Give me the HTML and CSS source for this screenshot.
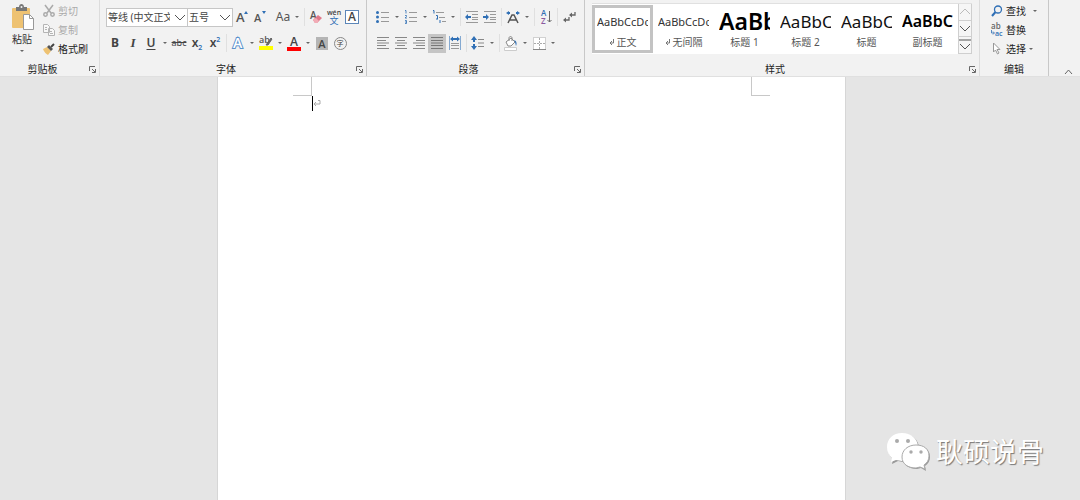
FILE: index.html
```html
<!DOCTYPE html>
<html lang="zh-CN">
<head>
    <meta charset="UTF-8">
    <meta name="viewport" content="width=device-width, initial-scale=1.0">

    <title>文档</title>

    <link rel="stylesheet" href="styles.css">
</head>
<body>

    <header class="ribbon">

        <section class="group group-clipboard">
            <div class="group-body clipboard">
                <button class="paste" type="button">
                    <svg width="24" height="28" viewBox="0 0 24 28">
                        <rect x="2" y="4" width="18" height="20" rx="1" fill="#eec272"/>
                        <path d="M6 3h3c0-4 5-4 5 0h3v4H6z" fill="#777"/>
                        <circle cx="11.500" cy="3" r="1" fill="#f2f2f2"/>
                        <path d="M13.500 10.500h6l4 4v11h-10z" fill="#fff" stroke="#999"/>
                        <path d="M19.500 10.500v4h4" fill="none" stroke="#999"/>
                    </svg>
                    <span>粘贴</span>
                    <i class="caret"></i>
                </button>
                <div class="commands">
                    <button class="command" type="button" disabled>
                        <svg width="12" height="12" viewBox="0 0 12 12" fill="none" stroke="#aaa" stroke-width="1.500">
                            <path d="M2 0l6 8M10 0L4 8"/>
                            <circle cx="2.500" cy="9.500" r="1.700"/>
                            <circle cx="9.500" cy="9.500" r="1.700"/>
                        </svg>
                        剪切
                    </button>
                    <button class="command" type="button" disabled>
                        <svg width="12" height="12" viewBox="0 0 12 12" fill="#f8f8f8" stroke="#b4b4b4">
                            <path d="M.5.5h4l2 2v6h-6zM5.500 4.500h4l2 2v5h-6z"/>
                            <path d="M2 3.500h2M2 5.500h2M7 7.500h2M7 9.500h3"/>
                        </svg>
                        复制
                    </button>
                    <button class="command" type="button">
                        <svg width="12" height="12" viewBox="0 0 12 12">
                            <path d="M0 6l4-2 4 4-3 4c-2-1-4-3-5-6z" fill="#eec272"/>
                            <path d="M4 4l2-2 4 4-2 2z" fill="#555"/>
                            <path d="M8 4l3-3" stroke="#444" stroke-width="2"/>
                        </svg>
                        格式刷
                    </button>
                </div>
            </div>
            <div class="group-footer">
                <span>剪贴板</span>
                <button class="launcher" type="button" aria-label="剪贴板设置"><svg width="7" height="7" viewBox="0 0 7 7"><path d="M.5 5V.5H6M3 3l3 3M6.500 3v3.500H3" fill="none" stroke="#666"/></svg></button>
            </div>
        </section>

        <section class="group group-font">
            <div class="group-body tools">
                <div class="tool-row">
                    <div class="combo combo-font">
                        <select aria-label="字体"><option>等线 (中文正文)</option></select>
                        <svg width="12" height="7" viewBox="0 0 12 7"><path d="M1 1l5 5 5-5" fill="none" stroke="#555"/></svg>
                    </div>
                    <div class="combo combo-size">
                        <select aria-label="字号"><option>五号</option></select>
                        <svg width="12" height="7" viewBox="0 0 12 7"><path d="M1 1l5 5 5-5" fill="none" stroke="#555"/></svg>
                    </div>
                    <button class="tool" type="button" aria-label="增大字号">
                        <svg width="14" height="16" viewBox="0 0 14 16"><text x="1" y="13" class="glyph">A</text><path d="M9 5l2-3 2 3z" fill="#2f6fb5"/></svg>
                    </button>
                    <button class="tool" type="button" aria-label="减小字号">
                        <svg width="14" height="16" viewBox="0 0 14 16"><text x="1" y="13" class="glyph glyph-small">A</text><path d="M9 2l2 3 2-3z" fill="#2f6fb5"/></svg>
                    </button>
                    <i class="sep sep-clear"></i>
                    <button class="tool tool-case" type="button">Aa</button>
                    <button class="drop" type="button" aria-label="更改大小写"><i class="caret"></i></button>
                    <i class="sep"></i>
                    <button class="tool" type="button" aria-label="清除格式">
                        <svg width="14" height="14" viewBox="0 0 14 14"><text x="1" y="9" class="glyph glyph-clear">A</text><path d="M4 10l5-5 4 3-5 5H6z" fill="#e0798a"/><path d="M4 10l3-2 3 3-2 2H6z" fill="#f2acb6"/></svg>
                    </button>
                    <button class="tool" type="button" aria-label="拼音指南">
                        <svg width="14" height="16" viewBox="0 0 14 16"><text x="7" y="6" class="pinyin">wén</text><text x="7" y="15" class="pinyin-char">文</text></svg>
                    </button>
                    <button class="tool" type="button"><span class="boxed">A</span></button>
                </div>
                <div class="tool-row">
                    <button class="tool bold" type="button">B</button>
                    <button class="tool italic" type="button">I</button>
                    <button class="tool underline" type="button">U</button>
                    <button class="drop" type="button" aria-label="下划线样式"><i class="caret"></i></button>
                    <button class="tool strike" type="button">abc</button>
                    <button class="tool script" type="button">x<sub>2</sub></button>
                    <button class="tool script" type="button">x<sup>2</sup></button>
                    <i class="sep"></i>
                    <button class="tool" type="button" aria-label="文本效果">
                        <svg width="14" height="14" viewBox="0 0 14 14"><text x="2" y="12" class="outlined">A</text></svg>
                    </button>
                    <button class="drop" type="button" aria-label="文本效果选项"><i class="caret"></i></button>
                    <button class="tool" type="button" aria-label="突出显示">
                        <svg width="14" height="14" viewBox="0 0 14 14"><text x="0" y="7" class="glyph glyph-tiny">ab</text><path d="M7 9l5-7 1 1-4 6-2 0z" fill="#666" stroke="#666"/><path d="M0 10h14v4H0z" fill="#ff0"/></svg>
                    </button>
                    <button class="drop" type="button" aria-label="突出显示颜色"><i class="caret"></i></button>
                    <button class="tool" type="button"><span class="colored">A</span></button>
                    <button class="drop" type="button" aria-label="字体颜色"><i class="caret"></i></button>
                    <button class="tool" type="button"><span class="shaded">A</span></button>
                    <button class="tool" type="button"><span class="circled">字</span></button>
                </div>
            </div>
            <div class="group-footer">
                <span>字体</span>
                <button class="launcher" type="button" aria-label="字体设置"><svg width="7" height="7" viewBox="0 0 7 7"><path d="M.5 5V.5H6M3 3l3 3M6.500 3v3.500H3" fill="none" stroke="#666"/></svg></button>
            </div>
        </section>

        <section class="group group-paragraph">
            <div class="group-body tools">
                <div class="tool-row">
                    <button class="tool" type="button" aria-label="项目符号">
                        <svg width="14" height="12" viewBox="0 0 14 12"><path d="M5 1.500h8M5 6.500h8M5 10.500h8" stroke="#999"/><g fill="#2f6fb5"><circle cx="1.500" cy="1.500" r="1.500"/><circle cx="1.500" cy="6" r="1.500"/><circle cx="1.500" cy="10.500" r="1.500"/></g></svg>
                    </button>
                    <button class="drop" type="button" aria-label="项目符号库"><i class="caret"></i></button>
                    <button class="tool" type="button" aria-label="编号">
                        <svg width="14" height="14" viewBox="0 0 14 14"><path d="M5 2.500h8M5 7.500h8M5 11.500h8" stroke="#999"/><path d="M1 .5h1v3M1 5.500h1.500v1L1 8h2M1 10.500h1.500v3H1M1 12h1.500" fill="none" stroke="#2f6fb5" stroke-width=".8"/></svg>
                    </button>
                    <button class="drop" type="button" aria-label="编号库"><i class="caret"></i></button>
                    <button class="tool" type="button" aria-label="多级列表">
                        <svg width="14" height="14" viewBox="0 0 14 14"><path d="M4 2.500h8M7 7.500h6M10 11.500h4" stroke="#999"/><path d="M1 .5h1v3M4 5.500h1.500V9M4 9h2M8 10v3" fill="none" stroke="#2f6fb5"/></svg>
                    </button>
                    <button class="drop" type="button" aria-label="列表库"><i class="caret"></i></button>
                    <i class="sep"></i>
                    <button class="tool" type="button" aria-label="减少缩进量">
                        <svg width="14" height="12" viewBox="0 0 14 12"><path d="M1 .5h12M7 3.500h6M7 6.500h6M7 8.500h6M1 11.500h12" stroke="#999"/><path d="M0 6l3-3v2h3v2H3v2z" fill="#2f6fb5"/></svg>
                    </button>
                    <button class="tool" type="button" aria-label="增加缩进量">
                        <svg width="14" height="12" viewBox="0 0 14 12"><path d="M1 .5h12M7 3.500h6M7 6.500h6M7 8.500h6M1 11.500h12" stroke="#999"/><path d="M6 6L3 3v2H0v2h3v2z" fill="#2f6fb5"/></svg>
                    </button>
                    <i class="sep"></i>
                    <button class="tool" type="button" aria-label="中文版式">
                        <svg width="14" height="12" viewBox="0 0 14 12"><path d="M2 12l4-8h2l4 8M4 9h6" fill="none" stroke="#555" stroke-width="1.500"/><path d="M0 2l3-2v1h1v2H3v1zM14 2l-3-2v1h-1v2h1v1z" fill="#2f6fb5"/></svg>
                    </button>
                    <button class="drop" type="button" aria-label="版式选项"><i class="caret"></i></button>
                    <i class="sep"></i>
                    <button class="tool" type="button" aria-label="排序">
                        <svg width="12" height="14" viewBox="0 0 12 14"><text x="1" y="6" class="sort-a">A</text><text x="1" y="14" class="sort-z">Z</text><path d="M9.500 1v11M7.500 10l2 2 2-2" fill="none" stroke="#666"/></svg>
                    </button>
                    <i class="sep"></i>
                    <button class="tool" type="button" aria-label="显示编辑标记">
                        <svg width="13" height="12" viewBox="0 0 13 12"><path d="M12 1v3H7M6 6v3H1" fill="none" stroke="#666" stroke-width="1.300"/><path d="M6 4l3-2.500v5zM0 9l3-2.500v5z" fill="#666"/></svg>
                    </button>
                </div>
                <div class="tool-row">
                    <button class="tool" type="button" aria-label="左对齐">
                        <svg width="12" height="12" viewBox="0 0 12 12"><path d="M0 .5h12M0 3.500h9M0 6h12M0 8.500h9M0 11.500h12" stroke="#888"/></svg>
                    </button>
                    <button class="tool" type="button" aria-label="居中">
                        <svg width="12" height="12" viewBox="0 0 12 12"><path d="M0 .5h12M2 3.500h8M0 6h12M2 8.500h8M0 11.500h12" stroke="#888"/></svg>
                    </button>
                    <button class="tool" type="button" aria-label="右对齐">
                        <svg width="12" height="12" viewBox="0 0 12 12"><path d="M0 .5h12M3 3.500h9M0 6h12M3 8.500h9M0 11.500h12" stroke="#888"/></svg>
                    </button>
                    <button class="tool active" type="button" aria-label="两端对齐">
                        <svg width="12" height="12" viewBox="0 0 12 12"><path d="M0 .5h12M0 3.500h12M0 6h12M0 8.500h12M0 11.500h12" stroke="#777"/></svg>
                    </button>
                    <button class="tool" type="button" aria-label="分散对齐">
                        <svg width="12" height="14" viewBox="0 0 12 14"><path d="M.5 0v14M11.500 0v14" stroke="#84a9d1"/><path d="M2 7.500h8M2 9.500h8M2 12.500h8" stroke="#999"/><path d="M1 3l3-2.500V2h4V.5L11 3 8 5.500V4H4v1.500z" fill="#2f6fb5"/></svg>
                    </button>
                    <i class="sep"></i>
                    <button class="tool" type="button" aria-label="行距">
                        <svg width="14" height="14" viewBox="0 0 14 14"><path d="M7 3.500h6M7 7h6M7 10.500h6" stroke="#888"/><path d="M3 0l3 4H4v2H2V4H0zM3 14l3-4H4V8H2v2H0z" fill="#2f6fb5"/></svg>
                    </button>
                    <button class="drop" type="button" aria-label="行距选项"><i class="caret"></i></button>
                    <i class="sep"></i>
                    <button class="tool" type="button" aria-label="底纹">
                        <svg width="14" height="15" viewBox="0 0 14 15"><path d="M2 6l5-4 4 4-4 4H4z" fill="#fff" stroke="#888"/><path d="M5 5V2c0-2 3-2 3 0v3" fill="none" stroke="#888"/><path d="M10 4c3 1 3 4 2 6l-1-4z" fill="#2f6fb5"/><path d="M.5 11.500h12v3H.5z" fill="#fff" stroke="#ccc"/></svg>
                    </button>
                    <button class="drop" type="button" aria-label="底纹颜色"><i class="caret"></i></button>
                    <button class="tool" type="button" aria-label="边框">
                        <svg width="13" height="13" viewBox="0 0 13 13"><path d="M.5.5h12v12H.5z" fill="#fff" stroke="#aaa" stroke-dasharray="1 1"/><path d="M6.500 1v11M1 6.500h11" stroke="#aaa" stroke-dasharray="2 1"/><path d="M0 12.500h13" stroke="#888"/></svg>
                    </button>
                    <button class="drop" type="button" aria-label="边框选项"><i class="caret"></i></button>
                </div>
            </div>
            <div class="group-footer">
                <span>段落</span>
                <button class="launcher" type="button" aria-label="段落设置"><svg width="7" height="7" viewBox="0 0 7 7"><path d="M.5 5V.5H6M3 3l3 3M6.500 3v3.500H3" fill="none" stroke="#666"/></svg></button>
            </div>
        </section>

        <section class="group group-styles">
            <div class="group-body gallery">
                <button class="style-item selected" type="button">
                    <span class="sample">AaBbCcDc</span>
                    <span class="style-name"><svg width="5" height="6" viewBox="0 0 5 6"><path d="M4.500 0v4H1M3 2L1 4l2 2" fill="none" stroke="#777"/></svg>正文</span>
                </button>
                <button class="style-item" type="button">
                    <span class="sample">AaBbCcDc</span>
                    <span class="style-name"><svg width="5" height="6" viewBox="0 0 5 6"><path d="M4.500 0v4H1M3 2L1 4l2 2" fill="none" stroke="#777"/></svg>无间隔</span>
                </button>
                <button class="style-item" type="button">
                    <span class="sample sample-h1">AaBb</span>
                    <span class="style-name">标题 1</span>
                </button>
                <button class="style-item" type="button">
                    <span class="sample sample-h2">AaBbC</span>
                    <span class="style-name">标题 2</span>
                </button>
                <button class="style-item" type="button">
                    <span class="sample sample-h2">AaBbC</span>
                    <span class="style-name">标题</span>
                </button>
                <button class="style-item" type="button">
                    <span class="sample sample-sub">AaBbC</span>
                    <span class="style-name">副标题</span>
                </button>
                <div class="gallery-scroll">
                    <button type="button" aria-label="上一行" disabled><svg width="12" height="7" viewBox="0 0 12 7"><path d="M1 6l5-5 5 5" fill="none" stroke="#bbb"/></svg></button>
                    <button type="button" aria-label="下一行"><svg width="12" height="7" viewBox="0 0 12 7"><path d="M1 1l5 5 5-5" fill="none" stroke="#555"/></svg></button>
                    <button type="button" aria-label="其他样式"><svg width="12" height="12" viewBox="0 0 12 12"><path d="M0 1h12M1 5l5 5 5-5" fill="none" stroke="#555"/></svg></button>
                </div>
            </div>
            <div class="group-footer">
                <span>样式</span>
                <button class="launcher" type="button" aria-label="样式窗格"><svg width="7" height="7" viewBox="0 0 7 7"><path d="M.5 5V.5H6M3 3l3 3M6.500 3v3.500H3" fill="none" stroke="#666"/></svg></button>
            </div>
        </section>

        <section class="group group-editing">
            <div class="group-body commands">
                <button class="command" type="button">
                    <svg width="12" height="12" viewBox="0 0 12 12" fill="none" stroke="#2f6fb5"><circle cx="7" cy="4.500" r="3.500" stroke-width="1.300"/><path d="M4.500 7L1 11" stroke-width="2"/></svg>
                    查找 <i class="caret caret-far"></i>
                </button>
                <button class="command" type="button">
                    <svg width="12" height="13" viewBox="0 0 12 13"><text x="0" y="6" class="replace-a">ab</text><text x="4" y="13" class="replace-b">ac</text><path d="M.5 7v3H3M2 8.500L3.500 10 2 11.500" fill="none" stroke="#2f6fb5" stroke-width=".8"/></svg>
                    替换
                </button>
                <button class="command" type="button">
                    <svg width="12" height="13" viewBox="0 0 12 13"><path d="M2.500 1v9l2-2 2 4 1.500-1-2-3.500H9z" fill="#fff" stroke="#999"/></svg>
                    选择<i class="caret"></i>
                </button>
            </div>
            <div class="group-footer">
                <span>编辑</span>
            </div>
        </section>

        <div class="ribbon-end">
            <button class="collapse" type="button" aria-label="折叠功能区"><svg width="9" height="6" viewBox="0 0 9 6"><path d="M1 5l3.500-4L8 5" fill="none" stroke="#666"/></svg></button>
        </div>

    </header>

    <main class="workspace">
        <div class="page">
            <div class="corners">
                <i class="corner corner-left"></i>
                <i class="corner corner-right"></i>
            </div>
            <div class="line">
                <i class="cursor"></i>
                <svg width="8" height="7" viewBox="0 0 8 7"><path d="M5 .5h2v3.500H1M3 2L1 4l2 2" fill="none" stroke="#aaa"/></svg>
            </div>
        </div>

        <div class="watermark">
            <svg width="46" height="40" viewBox="0 0 46 40">
                <g fill="#999">
                    <path d="M17 2C8 2 2 8 2 16c0 5 2 8 5 11l-1 5 6-3 5 1c9 0 16-6 16-14S26 2 17 2z"/>
                    <path d="M31 14c-8 0-14 5-14 12s6 11 14 11l4-1 5 3-1-5c3-2 5-5 5-9 0-7-5-11-13-11z"/>
                </g>
                <path d="M16 1C7 1 1 7 1 15c0 5 2 8 5 11l-1 4 5-2 6 1c9 0 16-6 16-14S25 1 16 1z" fill="#fff"/>
                <path d="M30 13c-8 0-14 5-14 12s6 11 14 11l4-1 5 2-1-4c3-2 5-5 5-9 0-7-5-11-13-11z" fill="#fff" stroke="#aaa"/>
                <g fill="#aaa"><circle cx="11" cy="9" r="2"/><circle cx="22" cy="9" r="2"/><circle cx="25" cy="20" r="1.700"/><circle cx="35" cy="20" r="1.700"/></g>
            </svg>
            <span>耿硕说骨</span>
        </div>
    </main>

</body>
</html>
```
FILE: styles.css
```css
* {
    box-sizing: border-box;
}
body {
    margin: 0;
    min-height: 100vh;
    display: flex;
    flex-direction: column;
    font: 10px/14px "Noto Sans", "Noto Sans CJK SC", sans-serif;
    color: #333;
    background: #e5e5e5;
}
button {
    margin: 0;
    padding: 0;
    border: none;
    background: none;
    font: inherit;
    color: inherit;
}
svg {
    display: block;
    flex: none;
    overflow: visible;
}

/* ribbon */
.ribbon {
    display: flex;
    background: #f2f2f2;
    border-bottom: 1px solid #e0e0e0;
}
.group {
    display: flex;
    flex-direction: column;
    flex: none;
    border-right: 1px solid #c8c8c8;
}
.group-clipboard {
    width: 100px;
    border-right-color: #dcdcdc;
}
.group-font {
    width: 267px;
}
.group-paragraph {
    width: 218px;
}
.group-styles {
    flex: 1;
    min-width: 0;
    border-right-color: #dcdcdc;
}
.group-editing {
    width: 69px;
}
.group-body {
    height: 62px;
}
.group-footer {
    display: flex;
    align-items: center;
    color: #222;
}
.group-footer span {
    flex: 1;
    text-align: center;
}
.launcher {
    width: 14px;
    display: flex;
    justify-content: center;
}
.caret {
    flex: none;
    border: 2px solid transparent;
    border-top-color: #666;
    border-bottom: none;
}

/* clipboard and editing commands */
.clipboard {
    display: flex;
    gap: 10px;
    padding-left: 11px;
}
.paste {
    display: flex;
    flex-direction: column;
    align-items: center;
    padding-top: 4px;
    width: 22px;
    white-space: nowrap;
}
.paste .caret {
    margin-top: 4px;
}
.commands {
    display: flex;
    flex-direction: column;
    padding-top: 1px;
}
.command {
    display: flex;
    align-items: center;
    gap: 3px;
    height: 19px;
    white-space: nowrap;
    color: #222;
}
.command:disabled {
    color: #aaa;
}
.group-editing .commands {
    padding-left: 11px;
}
.caret-far {
    margin-left: 4px;
}

/* font and paragraph tools */
.tools {
    padding: 4px 0 0 6px;
}
.group-paragraph .tools {
    padding-left: 7px;
}
.tool-row {
    display: flex;
    align-items: center;
    height: 26px;
}
.tool,
.drop {
    display: flex;
    flex: none;
    align-items: center;
    justify-content: center;
    width: 18px;
    height: 19px;
    color: #444;
}
.drop {
    width: 10px;
}
.active {
    background: #c5c5c5;
}
.sep {
    width: 1px;
    height: 18px;
    margin: 0 2px;
    background: #e0e0e0;
}
.sep-clear {
    background: none;
}
.combo {
    position: relative;
    height: 19px;
}
.combo-font {
    width: 82px;
    margin-right: -1px;
}
.combo-size {
    width: 46px;
}
.combo select {
    display: block;
    width: 100%;
    height: 100%;
    padding: 0 17px 0 1px;
    border: 1px solid #c6c6c6;
    border-radius: 0;
    background: #fff;
    font: inherit;
    color: #444;
    appearance: none;
    overflow: hidden;
}
.combo svg {
    position: absolute;
    right: 2px;
    top: 6px;
    pointer-events: none;
}
.glyph {
    font: 600 13px "Open Sans", sans-serif;
    fill: #555;
}
.glyph-small {
    font-size: 11px;
}
.glyph-tiny {
    font-size: 9px;
}
.glyph-clear {
    font-size: 10px;
}
.tool-case {
    font-size: 12px;
    color: #555;
}
.pinyin {
    font: 600 7px "Open Sans", sans-serif;
    fill: #444;
    text-anchor: middle;
}
.pinyin-char {
    font: 9px "Noto Sans CJK SC", sans-serif;
    fill: #2f6fb5;
    text-anchor: middle;
}
.boxed {
    width: 14px;
    border: 1px solid #5c86b8;
    background: #fff;
    font: 600 12px/12px "Open Sans", sans-serif;
}
.bold {
    font-size: 12px;
    font-weight: bold;
}
.italic {
    font: italic bold 13px "Liberation Serif", serif;
}
.underline {
    font-size: 12px;
    font-weight: 600;
    text-decoration: underline;
    text-underline-offset: 2px;
}
.strike {
    font-size: 9px;
    text-decoration: line-through;
}
.script {
    font-size: 12px;
    font-weight: 600;
}
.script sub,
.script sup {
    font-size: 7px;
    line-height: 11px;
    color: #2f6fb5;
}
.script sub {
    align-self: flex-end;
}
.script sup {
    align-self: flex-start;
}
.outlined {
    font: 600 14px "Open Sans", sans-serif;
    fill: #fff;
    stroke: #5b91cc;
    stroke-width: 2px;
    paint-order: stroke;
}
.colored {
    width: 14px;
    border-bottom: 4px solid #f00;
    font: 600 12px/11px "Open Sans", sans-serif;
}
.shaded {
    width: 12px;
    background: #b5b5b5;
    font: 600 11px/13px "Open Sans", sans-serif;
}
.circled {
    width: 13px;
    border: 1px solid #888;
    border-radius: 50%;
    font-size: 7px;
    line-height: 11px;
}
.sort-a,
.sort-z {
    font: 600 8px "Open Sans", sans-serif;
    fill: #2f6fb5;
}
.sort-z {
    fill: #8a5ba0;
}
.replace-a,
.replace-b {
    font: 600 8px "Open Sans", sans-serif;
    fill: #666;
}
.replace-b {
    font-size: 7px;
    fill: #2f6fb5;
}

/* styles gallery */
.gallery {
    display: flex;
    height: 51px;
    margin: 3px 7px 8px 7px;
    background: #fff;
    border-top: 1px solid #e0e0e0;
}
.style-item {
    display: flex;
    flex: 1;
    flex-direction: column;
    min-width: 0;
    height: 48px;
    margin-top: 1px;
    padding: 3px 2px 0 2px;
    border: 3px solid transparent;
}
.style-item.selected {
    border-color: #c3c3c3;
}
.sample {
    height: 22px;
    width: 100%;
    overflow: hidden;
    font-size: 11px;
    line-height: 21px;
    text-align: left;
    white-space: nowrap;
    color: #333;
}
.sample-h1 {
    font-size: 23px;
    font-weight: 600;
    color: #000;
}
.sample-h2 {
    font-size: 17px;
    color: #111;
}
.sample-sub {
    font-size: 16px;
    font-weight: 600;
    color: #000;
}
.style-name {
    display: flex;
    align-items: center;
    justify-content: center;
    gap: 3px;
    height: 17px;
    width: 100%;
    white-space: nowrap;
    color: #555;
}
.gallery-scroll {
    display: flex;
    flex-direction: column;
    width: 14px;
}
.gallery-scroll button {
    display: flex;
    flex: 1;
    align-items: center;
    justify-content: center;
    border: 1px solid #cfcfcf;
    border-top: none;
    background: #f6f6f6;
}

.ribbon-end {
    display: flex;
    flex: none;
    align-items: flex-end;
    justify-content: center;
    width: 31px;
    padding: 0 0 1px 8px;
}

/* document */
.workspace {
    position: relative;
    display: flex;
    flex: 1;
    justify-content: center;
    padding-right: 17px;
}
.page {
    width: 100%;
    max-width: 629px;
    background: #fff;
    border: 1px solid #d6d6d6;
    border-width: 0 1px;
}
.corners {
    display: flex;
    justify-content: space-between;
    padding: 0 75px;
}
.corner {
    width: 19px;
    height: 19px;
    border-bottom: 1px solid #c8c8c8;
}
.corner-left {
    border-right: 1px solid #c8c8c8;
}
.corner-right {
    border-left: 1px solid #c8c8c8;
}
.line {
    display: flex;
    align-items: center;
    padding: 0 94px;
}
.cursor {
    width: 1px;
    height: 15px;
    background: #000;
}
.watermark {
    position: absolute;
    right: 36px;
    bottom: 28px;
    display: flex;
    align-items: center;
    gap: 4px;
    font-size: 27px;
    line-height: 40px;
    color: #fff;
    text-shadow: 1px 1px 1px #777;
}
```
